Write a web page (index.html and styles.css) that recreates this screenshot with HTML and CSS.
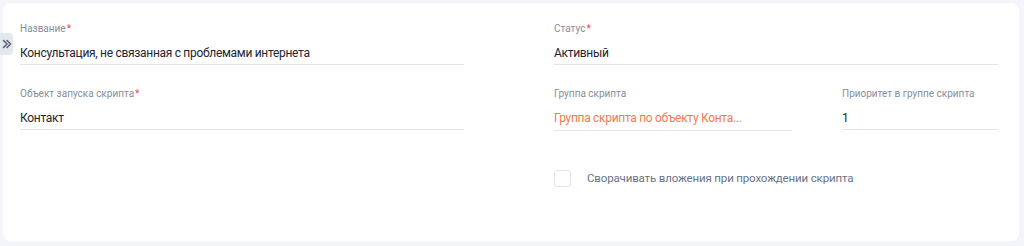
FILE: index.html
```html
<!DOCTYPE html>
<html lang="ru">
<head>
<meta charset="utf-8">
<link rel="stylesheet" href="styles.css">
</head>
<body>
<div class="card">
  <button class="toggle" type="button" aria-label="Развернуть">
    <svg width="10" height="10" viewBox="0 0 10 10"><path d="M1.5 1.5 5 5 1.5 8.5M5 1.5 8.5 5 5 8.5" fill="none" stroke="#5a6377" stroke-width="1.6" stroke-linecap="round" stroke-linejoin="round"/></svg>
  </button>
  <div class="grid">
    <div class="field">
      <div class="label">Название<span class="req">*</span></div>
      <div class="value">Консультация, не связанная с проблемами интернета</div>
    </div>
    <div class="field">
      <div class="label">Статус<span class="req">*</span></div>
      <div class="value">Активный</div>
    </div>
    <div class="field">
      <div class="label">Объект запуска скрипта<span class="req">*</span></div>
      <div class="value">Контакт</div>
    </div>
    <div class="split">
      <div class="field">
        <div class="label">Группа скрипта</div>
        <div class="value link">Группа скрипта по объекту Конта...</div>
      </div>
      <div class="field narrow">
        <div class="label">Приоритет в группе скрипта</div>
        <div class="value">1</div>
      </div>
    </div>
    <div></div>
    <label class="check">
      <span class="box"></span>
      <span class="check-text">Сворачивать вложения при прохождении скрипта</span>
    </label>
  </div>
</div>
</body>
</html>
```
FILE: styles.css
```css
* { box-sizing: border-box; }
html, body { margin: 0; padding: 0; }
body {
  background: #f4f5f9;
  font-family: Roboto, "Noto Sans", sans-serif;
  width: 1024px;
  height: 246px;
  overflow: hidden;
  padding: 3px 5px 5px 3px;
}
.card {
  position: relative;
  background: #fff;
  border-radius: 8px;
  height: 238px;
  padding: 19px 21px 0 17px;
}
.toggle {
  position: absolute;
  left: -3px;
  top: 30px;
  width: 13px;
  height: 22px;
  border: 0;
  padding: 0 0 0 1px;
  background: #e4e7ee;
  border-radius: 0 4px 4px 0;
  display: flex;
  align-items: center;
  justify-content: center;
}
.grid {
  display: grid;
  grid-template-columns: 444px 444px;
  column-gap: 90px;
  row-gap: 22px;
}
.field { display: flex; flex-direction: column; min-width: 0; }
.label {
  font-size: 10px;
  line-height: 14px;
  color: #878d9d;
  margin-bottom: 8px;
}
.req { color: #e5484d; margin-left: 1px; }
.value {
  font-size: 12px;
  letter-spacing: -0.3px;
  line-height: 18px;
  color: #1d2331;
  padding-bottom: 2px;
  border-bottom: 1px solid #e3e5ea;
  white-space: nowrap;
  overflow: hidden;
}
.value.link { color: #f27a53; padding-bottom: 3px; }
.split {
  display: grid;
  grid-template-columns: 238px 156px;
  column-gap: 50px;
  align-items: start;
}
.check {
  display: flex;
  align-items: center;
  margin-top: 16px;
  height: 18px;
}
.box {
  width: 17px;
  height: 17px;
  border: 1px solid #e2e4ea;
  border-radius: 3px;
  flex: none;
}
.check-text {
  margin-left: 16px;
  font-size: 11.5px;
  letter-spacing: -0.15px;
  color: #6b7386;
}
```
